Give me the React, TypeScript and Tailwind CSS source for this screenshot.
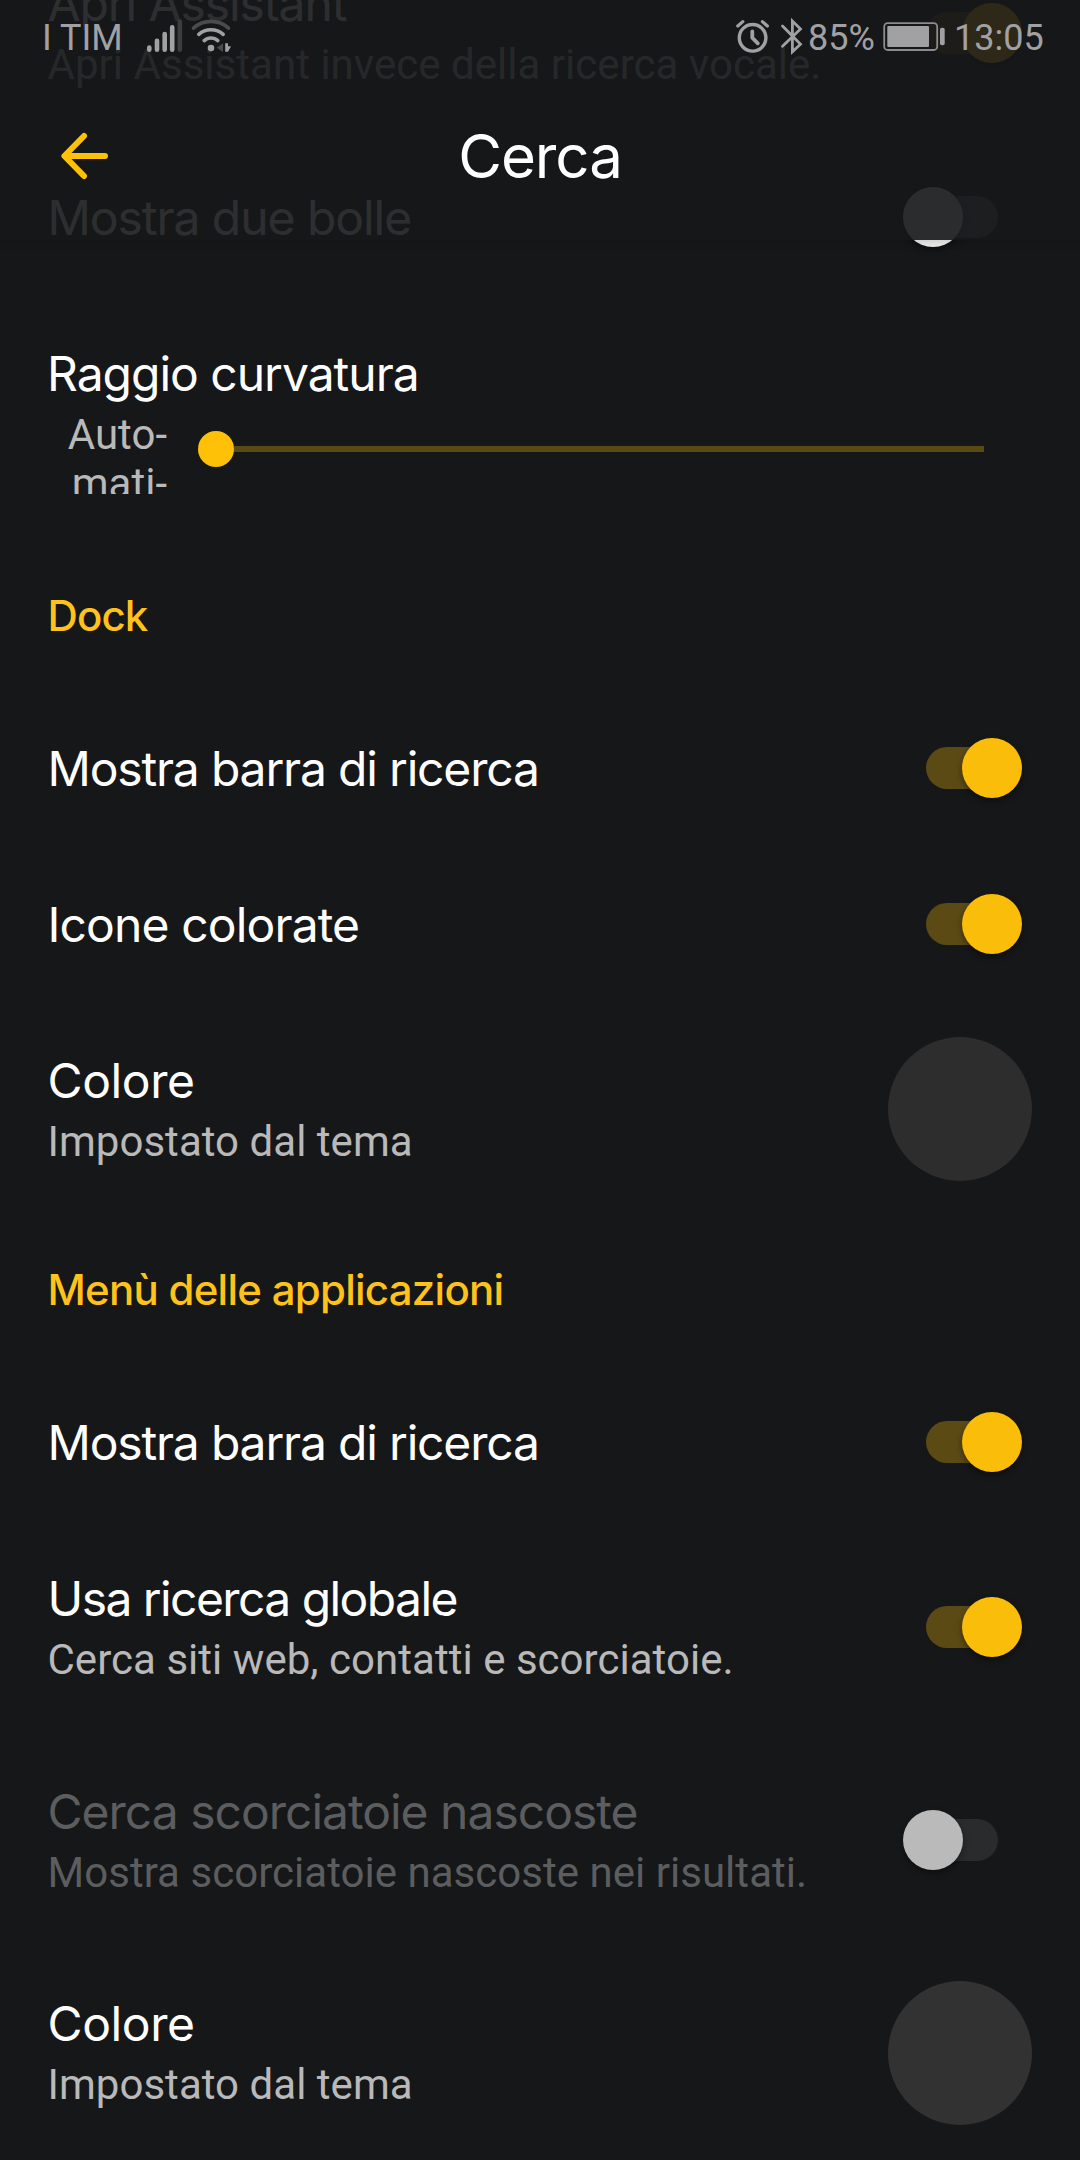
import clsx from 'clsx';
import type { ReactNode } from 'react';

function Switch({ on = false, disabled = false }: { on?: boolean; disabled?: boolean }) {
  return (
    <div className="flex w-[140px] shrink-0 justify-center">
      <div
        role="switch"
        aria-checked={on}
        aria-disabled={disabled}
        className={clsx(
          'relative h-[42px] w-[72px] rounded-full',
          on && 'bg-[#5c4a15]',
          !on && (disabled ? 'bg-[#2a2b2d]' : 'bg-[#58595b]'),
        )}
      >
        <span
          className={clsx(
            'absolute -top-[9px] size-[60px] rounded-full shadow-[0_3px_6px_rgba(0,0,0,0.4)]',
            on ? 'left-[35.5px] bg-[#fabd0a]' : '-left-[23.5px]',
            !on && (disabled ? 'bg-[#bababa]' : 'bg-[#ececec]'),
          )}
        />
      </div>
    </div>
  );
}

function Swatch({ className }: { className: string }) {
  return <div className={clsx('size-36 shrink-0 rounded-full', className)} />;
}

type RowProps = {
  title: string;
  tracking: string;
  summary?: string;
  disabled?: boolean;
  height?: string;
  children: ReactNode;
};

function Row({ title, tracking, summary, disabled = false, height = 'h-[156px]', children }: RowProps) {
  return (
    <div className={clsx('flex shrink-0 items-center justify-between pr-12 pl-[47.5px]', height)}>
      <div className="pt-[2px] whitespace-nowrap">
        <div
          className={clsx(
            'font-[Inter,sans-serif] text-[48px] leading-[68px]',
            tracking,
            disabled ? 'text-[#5c5d5e]' : 'text-white',
          )}
        >
          {title}
        </div>
        {summary && (
          <div
            className={clsx(
              'pb-[5px] text-[42px] leading-[54px] tracking-[0.03px]',
              disabled ? 'text-[#5c5d5e]' : 'text-[#b9b9ba]',
            )}
          >
            {summary}
          </div>
        )}
      </div>
      {children}
    </div>
  );
}

function SectionTitle({ tracking, children }: { tracking: string; children: ReactNode }) {
  return (
    <h2
      className={clsx(
        'h-[148px] shrink-0 pt-[49px] pr-12 pl-[47.5px] font-[Inter,sans-serif] text-[42px] leading-[50px] font-medium text-[#ffc21a]',
        tracking,
      )}
    >
      {children}
    </h2>
  );
}

function RadiusSlider() {
  return (
    <div className="h-[247px] shrink-0 pt-[45px] pl-[47px]">
      <div className="font-[Inter,sans-serif] text-[48px] leading-[68px] tracking-[-1.01px] text-white">
        Raggio curvatura
      </div>
      <div className="mt-[2px] flex">
        <div className="h-[84px] w-[120px] overflow-hidden text-right text-[42px] leading-[49px] text-[#b9b9ba]">
          Auto-
          <br />
          mati-
        </div>
        <div className="ml-[31px] flex h-[78px] w-[786px] items-center">
          <span className="size-9 shrink-0 rounded-full bg-[#ffc107]" />
          <span className="h-[6px] grow bg-[#5c4a15]" />
        </div>
      </div>
    </div>
  );
}

function SignalIcons() {
  return (
    <svg className="ml-[23px] h-[72px] w-[90px]" viewBox="145 0 90 72" fill="none" strokeLinecap="round">
      <g stroke="#a1a1a3" strokeWidth="4.6">
        <path d="M149.3 47.5V49.7M157 40.8V49.7M164.7 34V49.7M172.2 27.3V49.7" />
        <path d="M179.8 21.5V49.7" stroke="#3c3d3f" />
      </g>
      <g stroke="#a1a1a3" strokeWidth="3.6">
        <path d="M193.5 28.2Q201 21.4 211 21.4T228.5 28.2" stroke="#4a4b4d" />
        <path d="M198.8 34.4Q204 29.8 211 29.8T223.2 34.4" />
        <path d="M204.2 40.6Q207 38 211 38T217.8 40.6" />
      </g>
      <circle cx="211" cy="48" r="3.3" fill="#a1a1a3" />
      <path d="M223 43.3V52L216.8 47.8Z" fill="#4a4b4d" />
      <path d="M225.2 43.3H228V46.2H231L228 51.8H225.2Z" fill="#a1a1a3" />
    </svg>
  );
}

function AlarmBluetoothIcons() {
  return (
    <svg
      className="h-[72px] w-[70px]"
      viewBox="735 0 70 72"
      fill="none"
      stroke="#a1a1a3"
      strokeLinecap="round"
    >
      <circle cx="752.6" cy="37.8" r="13.3" strokeWidth="3.4" />
      <path d="M737.8 26L742.8 21.6M767.4 26L762.4 21.6" strokeWidth="3.2" />
      <path d="M752.3 31.5V37.8L757.8 43.3" strokeWidth="3.8" />
      <path
        d="M782.5 26L800.5 44.2L792.4 51.8V21L800.5 29L782.5 46.2"
        strokeWidth="2.8"
        strokeLinejoin="miter"
      />
    </svg>
  );
}

function BatteryIcon() {
  return (
    <svg className="h-[72px] w-[64px]" viewBox="882 0 64 72">
      <rect x="884.2" y="23.2" width="53" height="26.8" rx="3.5" fill="none" stroke="#8c8c8e" strokeWidth="1.8" />
      <rect x="887.3" y="26" width="41.7" height="21" rx="1" fill="#a1a1a3" />
      <rect x="940" y="27.7" width="4.7" height="17.6" rx="1.8" fill="#a1a1a3" />
    </svg>
  );
}

function TopBar() {
  return (
    <header className="absolute inset-x-0 top-0 h-[240px] bg-[#161719]/90 shadow-[0_2px_8px_rgba(0,0,0,0.15)]">
      <div className="flex h-[72px] items-center justify-between pr-[34px] pl-[42px] text-[36px] leading-[42px] whitespace-nowrap text-[#a1a1a3]">
        <div className="flex items-center">
          <span className="w-[80px] pt-[3px]">I TIM</span>
          <SignalIcons />
        </div>
        <div className="flex items-center">
          <AlarmBluetoothIcons />
          <span className="ml-[3px] w-[74px] pt-[3px]">85%</span>
          <BatteryIcon />
          <span className="ml-[8px] w-[92px] pt-[3px]">13:05</span>
        </div>
      </div>
      <div className="grid grid-cols-[1fr_auto_1fr] items-center px-[60px] pt-[46px]">
        <svg
          className="h-[48px] w-[50px]"
          viewBox="0 0 50 48"
          fill="none"
          stroke="#ffc107"
          strokeWidth="6"
          strokeLinecap="round"
          strokeLinejoin="round"
          aria-label="Indietro"
        >
          <path d="M24 4L4.4 24L24 44M5 24H45" />
        </svg>
        <h1 className="font-[Inter,sans-serif] text-[60px] leading-[76px] tracking-[-1.1px] text-white">
          Cerca
        </h1>
      </div>
    </header>
  );
}

export default function App() {
  return (
    <div className="relative h-[2160px] w-[1080px] overflow-hidden bg-[#161719] font-[Roboto,sans-serif]">
      {/* The list is scrolled: its first rows show through the translucent top bar */}
      <main className="-mt-[74px] flex flex-col">
        <Row
          title="Apri Assistant"
          summary="Apri Assistant invece della ricerca vocale."
          tracking="tracking-[-1.1px]"
          height="h-[213px]"
        >
          <Switch on />
        </Row>
        <Row title="Mostra due bolle" tracking="tracking-[-1.05px]">
          <Switch />
        </Row>
        <RadiusSlider />

        <SectionTitle tracking="tracking-[-0.9px]">Dock</SectionTitle>
        <Row title="Mostra barra di ricerca" tracking="tracking-[-1.18px]">
          <Switch on />
        </Row>
        <Row title="Icone colorate" tracking="tracking-[-0.86px]">
          <Switch on />
        </Row>
        <Row title="Colore" summary="Impostato dal tema" tracking="tracking-[-0.4px]" height="h-[214px]">
          <Swatch className="bg-[#2d2d2d]" />
        </Row>

        <SectionTitle tracking="tracking-[-0.75px]">Menù delle applicazioni</SectionTitle>
        <Row title="Mostra barra di ricerca" tracking="tracking-[-1.18px]">
          <Switch on />
        </Row>
        <Row
          title="Usa ricerca globale"
          summary="Cerca siti web, contatti e scorciatoie."
          tracking="tracking-[-1.57px]"
          height="h-[214px]"
        >
          <Switch on />
        </Row>
        <Row
          title="Cerca scorciatoie nascoste"
          summary="Mostra scorciatoie nascoste nei risultati."
          tracking="tracking-[-1px]"
          height="h-[212px]"
          disabled
        >
          <Switch disabled />
        </Row>
        <Row title="Colore" summary="Impostato dal tema" tracking="tracking-[-0.4px]" height="h-[213px]">
          <Swatch className="bg-[#323232]" />
        </Row>
      </main>
      <TopBar />
    </div>
  );
}
